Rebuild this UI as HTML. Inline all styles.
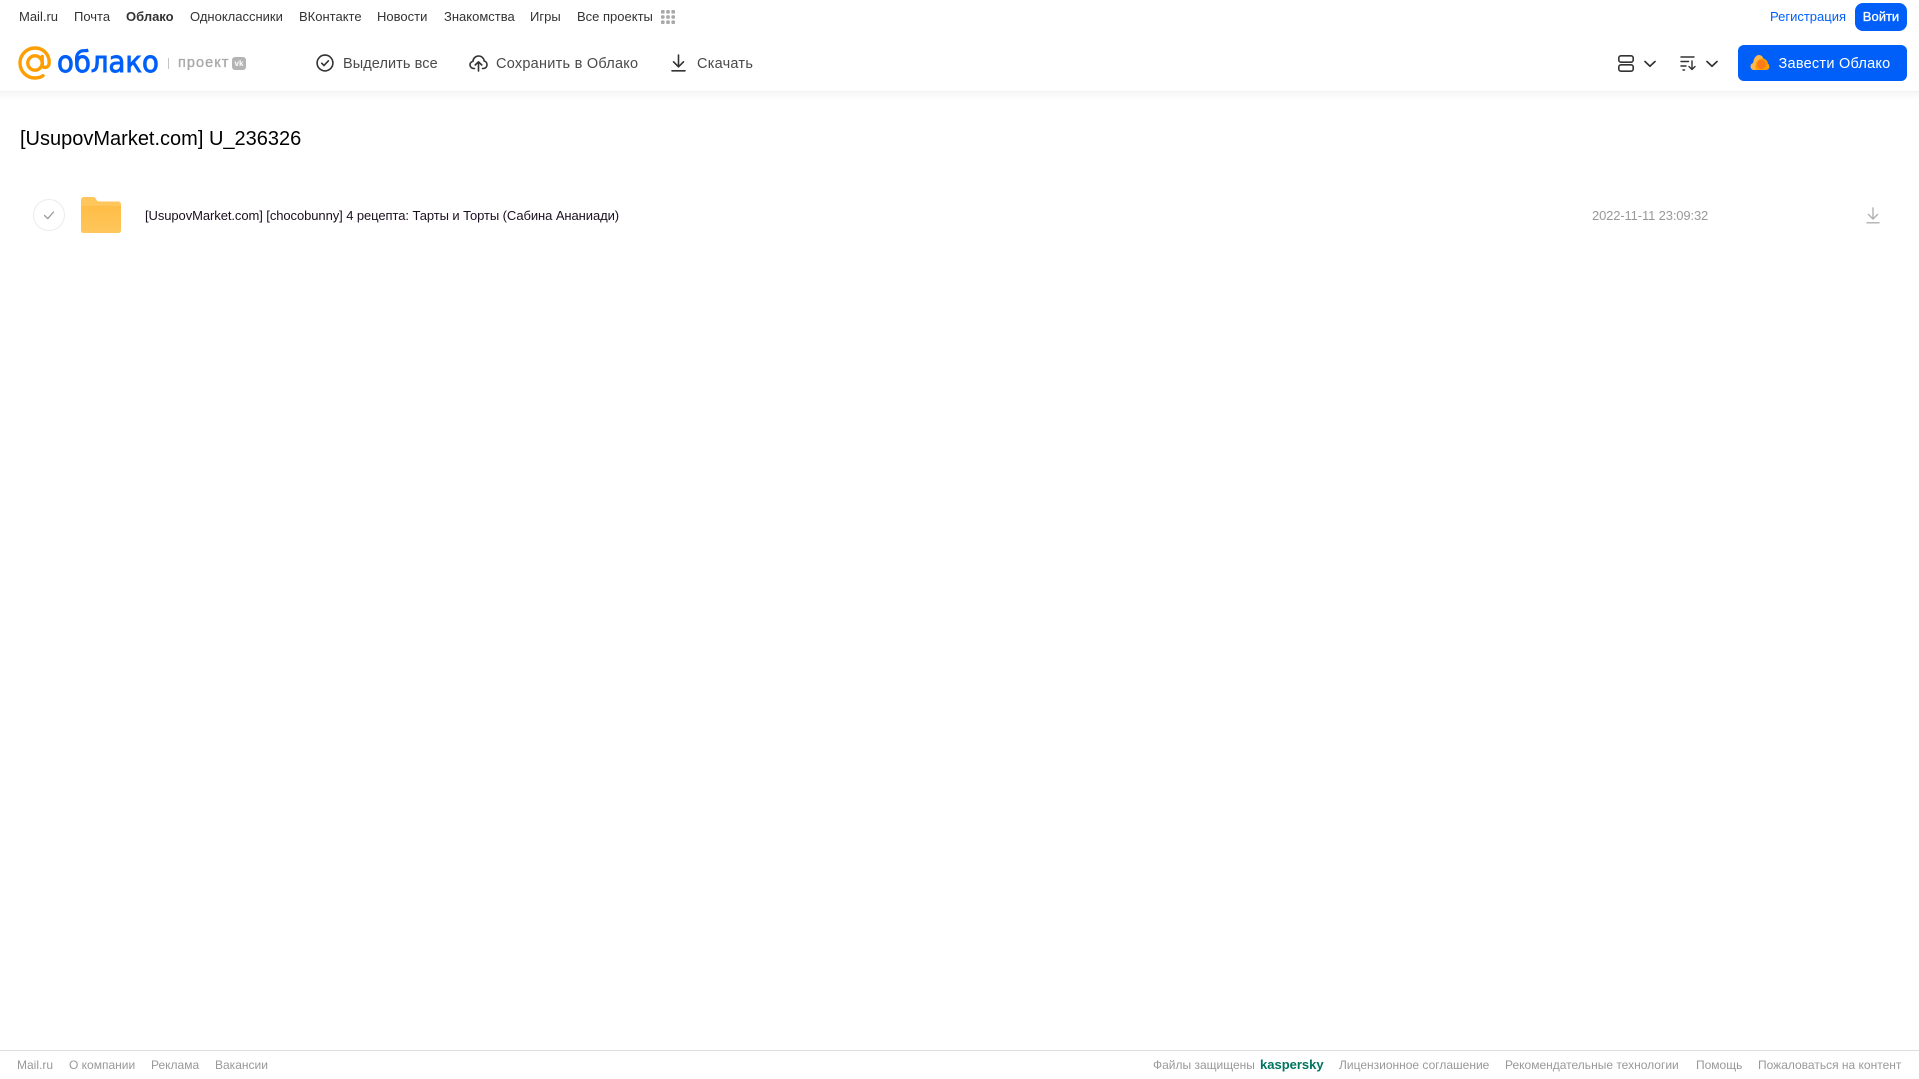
<!DOCTYPE html>
<html lang="ru">
<head>
<meta charset="utf-8">
<title>[UsupovMarket.com] U_236326</title>
<style>
html,body{margin:0;padding:0;background:#fff;width:1919px;height:1079px;overflow:hidden}
body{position:relative;font-family:"Liberation Sans","DejaVu Sans",sans-serif}
.t{position:absolute;white-space:nowrap;line-height:16px}
.nav{top:9px;font-size:13px;color:#333}
.tb{top:55.5px;font-size:14.5px;color:#4a4a4a;letter-spacing:.25px}
.f{top:1057px;font-size:12px;color:#999}
svg{position:absolute;display:block}
</style>
</head>
<body>
<div class="t nav" style="left:19px">Mail.ru</div>
<div class="t nav" style="left:74px">Почта</div>
<div class="t nav" style="left:126px;font-weight:bold">Облако</div>
<div class="t nav" style="left:190px">Одноклассники</div>
<div class="t nav" style="left:299px">ВКонтакте</div>
<div class="t nav" style="left:377px">Новости</div>
<div class="t nav" style="left:444px">Знакомства</div>
<div class="t nav" style="left:530px">Игры</div>
<div class="t nav" style="left:577px">Все проекты</div>
<svg style="left:661px;top:10px" width="14" height="14" fill="#a8a8a8"><rect x="0" y="0" width="3.6" height="3.6" rx="1"/><rect x="5.2" y="0" width="3.6" height="3.6" rx="1"/><rect x="10.4" y="0" width="3.6" height="3.6" rx="1"/><rect x="0" y="5.2" width="3.6" height="3.6" rx="1"/><rect x="5.2" y="5.2" width="3.6" height="3.6" rx="1"/><rect x="10.4" y="5.2" width="3.6" height="3.6" rx="1"/><rect x="0" y="10.4" width="3.6" height="3.6" rx="1"/><rect x="5.2" y="10.4" width="3.6" height="3.6" rx="1"/><rect x="10.4" y="10.4" width="3.6" height="3.6" rx="1"/></svg>

<div class="t" style="left:1770px;top:9px;font-size:13px;color:#005ff9">Регистрация</div>
<div style="position:absolute;left:1855px;top:3px;width:52px;height:28px;border-radius:8px;background:#005ff9"></div>
<div class="t" style="left:1855px;top:9px;width:52px;text-align:center;font-size:13px;color:#fff;-webkit-text-stroke:.3px #fff">Войти</div>

<div style="position:absolute;left:0;top:87px;width:1919px;height:14px;background:linear-gradient(#f2f2f2,#fff)"></div>
<div style="position:absolute;left:0;top:31px;width:1919px;height:60px;background:#fff;border-bottom:1px solid #f2f2f2"></div>

<svg style="left:18px;top:46px" width="34" height="34" viewBox="0 0 34 34" fill="none"><circle cx="17" cy="17" r="7.2" stroke="#ff9e00" stroke-width="3.4"/><path d="M24.2 10.4V18.5C24.2 22.8 31 22.6 31.2 16.8 31.4 8 24.8 2 17 2 8.7 2 2 8.7 2 17S8.7 32 17 32C20.2 32 22.8 31.2 25 29.7" stroke="#ff9e00" stroke-width="3.4" stroke-linecap="round"/></svg>
<div class="t" style="left:57px;top:44px;font-size:29px;line-height:36px;color:#005ff9;-webkit-text-stroke:.9px #005ff9;font-family:'DejaVu Sans',sans-serif;transform-origin:0 50%;transform:scaleX(.95)">облако</div>
<div style="position:absolute;left:168px;top:58px;width:1px;height:11px;background:#c4c4c4"></div>
<div class="t" style="left:178px;top:55px;font-size:14.5px;color:#a9a9a9;letter-spacing:1.05px;-webkit-text-stroke:.35px #a9a9a9">проект</div>
<div style="position:absolute;left:232px;top:57px;width:14px;height:13px;border-radius:3px;background:#b4b4b4"></div>
<div class="t" style="left:232px;top:57px;width:14px;text-align:center;font-size:8px;line-height:13px;font-weight:bold;color:#fff">vk</div>

<svg style="left:316px;top:54px" width="18" height="18" viewBox="0 0 18 18" fill="none" stroke="#333" stroke-width="1.6"><circle cx="9" cy="9" r="7.9"/><path d="M5.7 9.2 8 11.5 12.4 6.8" stroke-linecap="round" stroke-linejoin="round"/></svg>
<div class="t tb" style="left:343px;letter-spacing:.08px">Выделить все</div>
<svg style="left:469px;top:54px" width="19" height="18" viewBox="0 0 19 18" fill="none" stroke="#333" stroke-width="1.6" stroke-linecap="round" stroke-linejoin="round"><path d="M5.5 14.5H4.8C2.7 14.5 1 12.9 1 10.9 1 9.2 2.2 7.8 3.9 7.4 4.2 4.2 6.6 2 9.6 2 12.5 2 14.9 4.1 15.2 7 17 7.4 18 9 18 10.7 18 12.8 16.4 14.5 14.3 14.5H13.5"/><path d="M9.5 17V8M6.2 11 9.5 7.8 12.8 11"/></svg>
<div class="t tb" style="left:496px">Сохранить в Облако</div>
<svg style="left:671px;top:54px" width="15" height="18" viewBox="0 0 15 18" fill="none" stroke="#333" stroke-width="1.6" stroke-linecap="round" stroke-linejoin="round"><path d="M7.5 1V12.5M2.5 7.8 7.5 12.8 12.5 7.8"/><path d="M1 16.8H14"/></svg>
<div class="t tb" style="left:697px">Скачать</div>

<svg style="left:1618px;top:55px" width="16" height="17" viewBox="0 0 16 17" fill="none" stroke="#333" stroke-width="1.6"><rect x=".8" y=".8" width="14.4" height="6.4" rx="2.2"/><rect x=".8" y="9.8" width="14.4" height="6.4" rx="2.2"/></svg>
<svg style="left:1644px;top:60px" width="12" height="8" viewBox="0 0 12 8" fill="none" stroke="#333" stroke-width="1.7" stroke-linecap="round" stroke-linejoin="round"><path d="M1 1.5 6 6.2 11 1.5"/></svg>
<svg style="left:1680px;top:55px" width="17" height="16" viewBox="0 0 17 16" fill="none" stroke="#333" stroke-width="1.4" stroke-linecap="round" stroke-linejoin="round"><path d="M1 2H14M1 6.5H8.5M1 11H6M3 15H4.5"/><path d="M12 6V14.5M9 11.5 12 14.5 15 11.5"/></svg>
<svg style="left:1706px;top:60px" width="12" height="8" viewBox="0 0 12 8" fill="none" stroke="#333" stroke-width="1.7" stroke-linecap="round" stroke-linejoin="round"><path d="M1 1.5 6 6.2 11 1.5"/></svg>

<div style="position:absolute;left:1738px;top:45px;width:169px;height:36px;border-radius:6px;background:#005ff9"></div>
<svg style="left:1750px;top:54px" width="20" height="17" viewBox="0 0 20 17"><path d="M4 16C1.8 16 .5 14.3.5 12.5.5 10.6 1.8 9.3 3.2 9 3.5 4.5 6 1 9 1 11.5 1 13 3 13.5 5L14 16Z" fill="#ffb84d"/><path d="M7 16C5 15 4.5 12 6 10 7 6 10 4 13 4.5 16 5 18 7.5 17.8 9.5 19.5 10.5 19.8 13 19 14.5 18.3 15.6 17 16 16 16Z" fill="#ff9e00"/><circle cx="11.5" cy="10.5" r="4.6" fill="#ff7a1a"/></svg>
<div class="t" style="left:1778.5px;top:55.5px;font-size:14.5px;color:#fff;letter-spacing:.25px">Завести Облако</div>

<div class="t" style="left:20px;top:127px;font-size:20px;line-height:24px;color:#000">[UsupovMarket.com] U_236326</div>

<svg style="left:33px;top:199px" width="32" height="32" viewBox="0 0 32 32" fill="none"><circle cx="16" cy="16" r="15.5" stroke="#ececec"/><path d="M11.5 16.5 14.8 19.6 20.5 13" stroke="#9a9a9a" stroke-width="1.3" stroke-linecap="round" stroke-linejoin="round"/></svg>
<svg style="left:81px;top:197px" width="40" height="36" viewBox="0 0 41 36" preserveAspectRatio="none"><defs><linearGradient id="g" x1="0" y1="0" x2="0" y2="1"><stop offset="0" stop-color="#ffbd46"/><stop offset="1" stop-color="#ffc65c"/></linearGradient></defs><path d="M0 3C0 1.3 1.3 0 3 0H12C14 0 15 1 15.5 2.2 16 3.4 17 4.5 19 4.5H38C39.7 4.5 41 5.8 41 7.5V12H0Z" fill="#ffc65c"/><path d="M0 9H41V33.5C41 34.9 39.9 36 38.5 36H2.5C1.1 36 0 34.9 0 33.5Z" fill="url(#g)"/></svg>
<div class="t" style="left:145px;top:208px;font-size:13px;letter-spacing:-.08px;color:#1a0f1f">[UsupovMarket.com] [chocobunny] 4 рецепта: Тарты и Торты (Сабина Ананиади)</div>
<div class="t" style="left:1592px;top:208px;font-size:13px;letter-spacing:-.14px;color:#999">2022-11-11 23:09:32</div>
<svg style="left:1866px;top:207px" width="14" height="17" viewBox="0 0 14 17" fill="none" stroke="#b0b0b0" stroke-width="1.4" stroke-linecap="round" stroke-linejoin="round"><path d="M7 1V12M2.5 7.5 7 12 11.5 7.5"/><path d="M1 15.8H13"/></svg>

<div style="position:absolute;left:0;top:1050px;width:1919px;height:1px;background:#ddd"></div>
<div class="t f" style="left:17px">Mail.ru</div>
<div class="t f" style="left:69px">О компании</div>
<div class="t f" style="left:151px">Реклама</div>
<div class="t f" style="left:215px">Вакансии</div>
<div class="t f" style="left:1153px">Файлы защищены</div>
<div class="t f" style="left:1260px;font-size:13px;font-weight:bold;color:#00745f">kaspersky</div>
<div class="t f" style="left:1339px">Лицензионное соглашение</div>
<div class="t f" style="left:1505px">Рекомендательные технологии</div>
<div class="t f" style="left:1696px">Помощь</div>
<div class="t f" style="left:1758px">Пожаловаться на контент</div>
</body>
</html>
